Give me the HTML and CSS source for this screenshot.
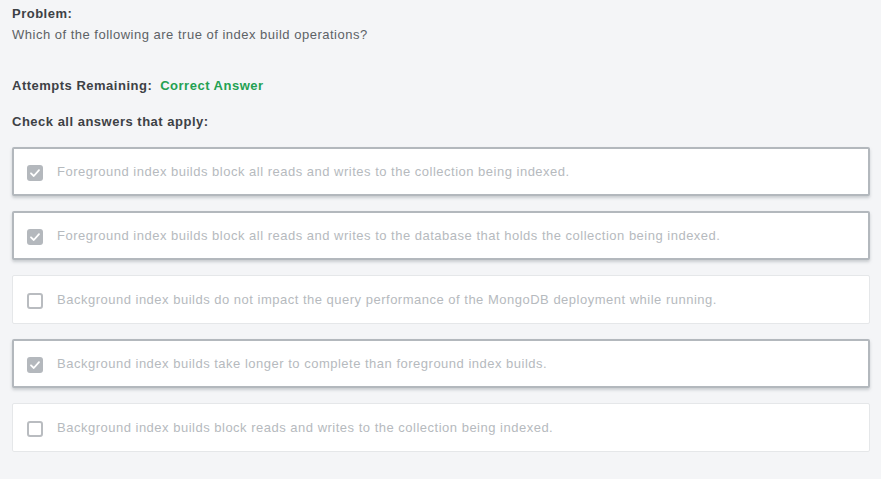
FILE: index.html
```html
<!DOCTYPE html>
<html>
<head>
<meta charset="utf-8">
<link rel="stylesheet" href="styles.css">
</head>
<body>
<div class="page">
  <div class="problem-label">Problem:</div>
  <div class="question">Which of the following are true of index build operations?</div>
  <div class="attempts"><span class="attempts-label">Attempts Remaining:</span><span class="status">Correct Answer</span></div>
  <div class="instructions">Check all answers that apply:</div>
  <div class="answers">
    <div class="answer selected">
      <span class="box checked"><svg viewBox="0 0 16 16" width="16" height="16"><path d="M4 8.3 L6.8 11 L12 5.2" fill="none" stroke="#fff" stroke-width="1.8" stroke-linecap="round" stroke-linejoin="round"/></svg></span>
      <span class="text">Foreground index builds block all reads and writes to the collection being indexed.</span>
    </div>
    <div class="answer selected">
      <span class="box checked"><svg viewBox="0 0 16 16" width="16" height="16"><path d="M4 8.3 L6.8 11 L12 5.2" fill="none" stroke="#fff" stroke-width="1.8" stroke-linecap="round" stroke-linejoin="round"/></svg></span>
      <span class="text">Foreground index builds block all reads and writes to the database that holds the collection being indexed.</span>
    </div>
    <div class="answer">
      <span class="box"></span>
      <span class="text">Background index builds do not impact the query performance of the MongoDB deployment while running.</span>
    </div>
    <div class="answer selected">
      <span class="box checked"><svg viewBox="0 0 16 16" width="16" height="16"><path d="M4 8.3 L6.8 11 L12 5.2" fill="none" stroke="#fff" stroke-width="1.8" stroke-linecap="round" stroke-linejoin="round"/></svg></span>
      <span class="text">Background index builds take longer to complete than foreground index builds.</span>
    </div>
    <div class="answer">
      <span class="box"></span>
      <span class="text">Background index builds block reads and writes to the collection being indexed.</span>
    </div>
  </div>
</div>
</body>
</html>
```
FILE: styles.css
```css
html, body {
  margin: 0;
  padding: 0;
  background: #f4f5f7;
}
body {
  font-family: "Liberation Sans", Arial, sans-serif;
  font-size: 13px;
  letter-spacing: 0.5px;
  color: #3d4145;
}
.page {
  padding: 6px 11px 0 12px;
}
.problem-label {
  font-weight: bold;
  line-height: 16px;
  color: #3d4145;
}
.question {
  line-height: 16px;
  margin-top: 5px;
  color: #5d6266;
}
.attempts {
  margin-top: 35px;
  line-height: 16px;
  font-weight: bold;
  display: flex;
  gap: 8px;
}
.status {
  color: #23a152;
}
.instructions {
  margin-top: 20px;
  line-height: 16px;
  font-weight: bold;
}
.answers {
  margin-top: 17px;
  display: flex;
  flex-direction: column;
  gap: 15px;
}
.answer {
  height: 49px;
  box-sizing: border-box;
  background: #fff;
  border: 1px solid #e5e7e9;
  border-radius: 2px;
  display: flex;
  align-items: center;
  padding-left: 14px;
}
.answer.selected {
  border: 2px solid #b3b8bd;
  padding-left: 13px;
  box-shadow: 0 2px 3px rgba(120, 128, 136, 0.35);
}
.box {
  width: 16px;
  height: 16px;
  box-sizing: border-box;
  border: 2px solid #b9bcc0;
  border-radius: 3px;
  flex: none;
  margin-right: 14px;
  display: flex;
  align-items: center;
  justify-content: center;
  position: relative;
  top: 1px;
}
.box.checked {
  background: #b4b8bd;
  border: none;
}
.text {
  color: #b6babe;
  white-space: nowrap;
}
```
